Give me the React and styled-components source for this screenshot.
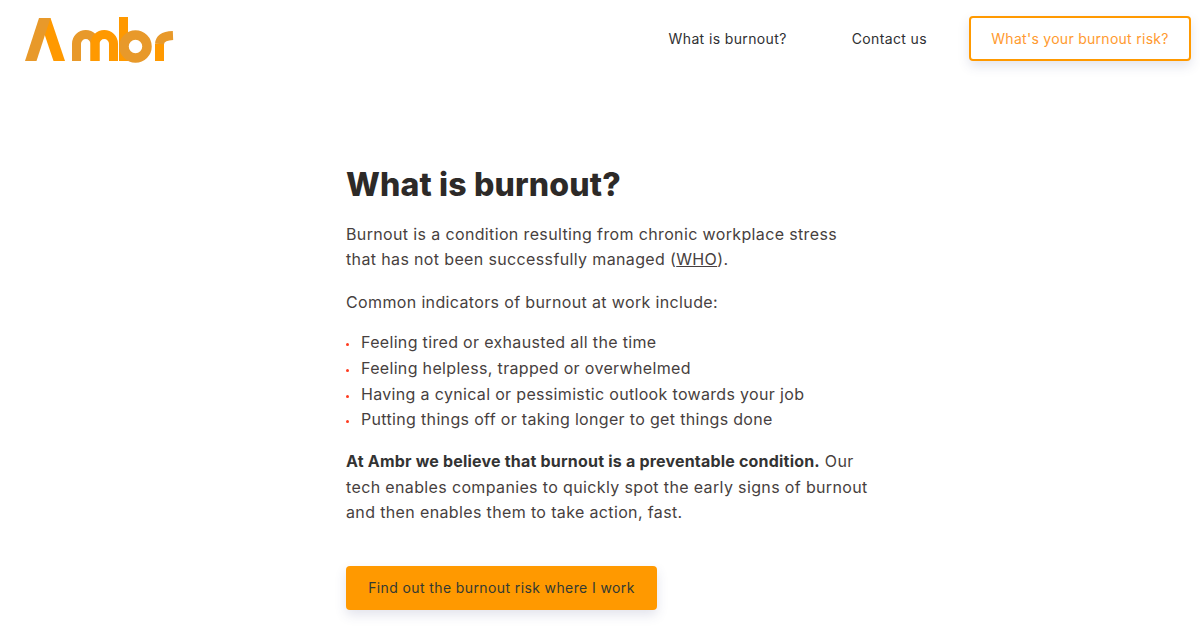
import React from 'react'
import styled, { createGlobalStyle } from 'styled-components'

const GlobalStyle = createGlobalStyle`
    html, body {
        margin: 0;
        padding: 0;
        background: #fff;
    }
    body {
        font-family: "Inter", "Open Sans", sans-serif;
        color: #3f3a3a;
    }
`

const Page = styled.div`
    width: 1200px;
    height: 643px;
    overflow: hidden;
`

const Header = styled.header`
    display: flex;
    justify-content: space-between;
    align-items: flex-start;
    padding: 16px 9px 0 25px;
`

const Logo = styled.svg`
    display: block;
    width: 150px;
    height: 48px;
    filter: blur(0.4px);
`

const Nav = styled.nav`
    display: flex;
    align-items: center;
`

const NavLink = styled.a`
    font-size: 14px;
    letter-spacing: 0.37px;
    color: #2f3033;
    margin-right: 65px;
    &:nth-child(2) {
        margin-right: 42px;
    }
`

const OutlineButton = styled.a`
    display: block;
    box-sizing: border-box;
    width: 222px;
    height: 45px;
    line-height: 41px;
    text-align: center;
    font-size: 14px;
    letter-spacing: 0.28px;
    color: #ff9a2e;
    border: 2px solid #ff9900;
    border-radius: 4px;
    box-shadow: 0 5px 12px rgba(60, 70, 130, 0.15);
`

const Main = styled.main`
    width: 526px;
    margin: 0 0 0 346px;
    padding-top: 101px;
`

const Title = styled.h1`
    margin: 0 0 16.5px;
    font-size: 32px;
    line-height: 40px;
    font-weight: 800;
    letter-spacing: 0.17px;
    color: #2d2a28;
`

const Text = styled.p`
    margin: 0 0 17.4px;
    font-size: 16px;
    line-height: 25.6px;
    letter-spacing: 0.36px;
    color: #473f40;
`

const Lead = styled(Text)`
    margin-bottom: 14.4px;
`

const Strong = styled.strong`
    font-weight: 700;
    letter-spacing: 0.2px;
    color: #333;
`

const Link = styled.a`
    color: inherit;
    text-decoration: underline;
`

const List = styled.ul`
    list-style: none;
    margin: 0 0 16px;
    padding: 0;
`

const Item = styled.li`
    position: relative;
    padding-left: 15px;
    font-size: 16px;
    line-height: 25.8px;
    letter-spacing: 0.33px;
    color: #473f40;
    &::before {
        content: '';
        position: absolute;
        left: 0;
        top: 13px;
        width: 3px;
        height: 3px;
        border-radius: 50%;
        background: #ff3b1f;
    }
`

const CtaButton = styled.a`
    display: block;
    box-sizing: border-box;
    width: 311px;
    height: 44px;
    margin-top: 40px;
    line-height: 44px;
    text-align: center;
    font-size: 14px;
    letter-spacing: 0.39px;
    color: #333a33;
    background: #ff9900;
    border-radius: 4px;
    box-shadow: 0 5px 12px rgba(60, 70, 130, 0.15);
`

const App = () => (
    <Page>
        <GlobalStyle />
        <Header>
            <Logo viewBox="0 0 150 48" aria-label="Ambr">
                <polygon points="14,2 25.5,2 40,45 28.5,45" fill="#ff9900" />
                <polygon points="0,45 11.5,45 25.5,2 14,2" fill="#e8992a" />
                <g fill="none" strokeWidth="9">
                    <path d="M51.5 45 V27.75 a9.25 9.25 0 0 1 18.5 0 V45" stroke="#e8992a" />
                    <path d="M70 45 V27.75 a9.25 9.25 0 0 1 18.5 0 V45" stroke="#ff9900" />
                    <path d="M98.5 1 V45" stroke="#ff9900" />
                    <circle cx="110.5" cy="30.5" r="11.5" strokeWidth="9.5" stroke="#e8992a" />
                    <path d="M134.5 45 V28" stroke="#ff9900" />
                    <path d="M134.5 28 Q135 20 148 19.5" stroke="#e8992a" />
                </g>
            </Logo>
            <Nav>
                <NavLink>What is burnout?</NavLink>
                <NavLink>Contact us</NavLink>
                <OutlineButton>What's your burnout risk?</OutlineButton>
            </Nav>
        </Header>
        <Main>
            <Title>What is burnout?</Title>
            <Text>
                Burnout is a condition resulting from chronic workplace stress
                that has not been successfully managed (<Link>WHO</Link>).
            </Text>
            <Lead>Common indicators of burnout at work include:</Lead>
            <List>
                <Item>Feeling tired or exhausted all the time</Item>
                <Item>Feeling helpless, trapped or overwhelmed</Item>
                <Item>Having a cynical or pessimistic outlook towards your job</Item>
                <Item>Putting things off or taking longer to get things done</Item>
            </List>
            <Text>
                <Strong>At Ambr we believe that burnout is a preventable condition.</Strong>{' '}
                Our tech enables companies to quickly spot the early signs of burnout
                and then enables them to take action, fast.
            </Text>
            <CtaButton>Find out the burnout risk where I work</CtaButton>
        </Main>
    </Page>
)

export default App
